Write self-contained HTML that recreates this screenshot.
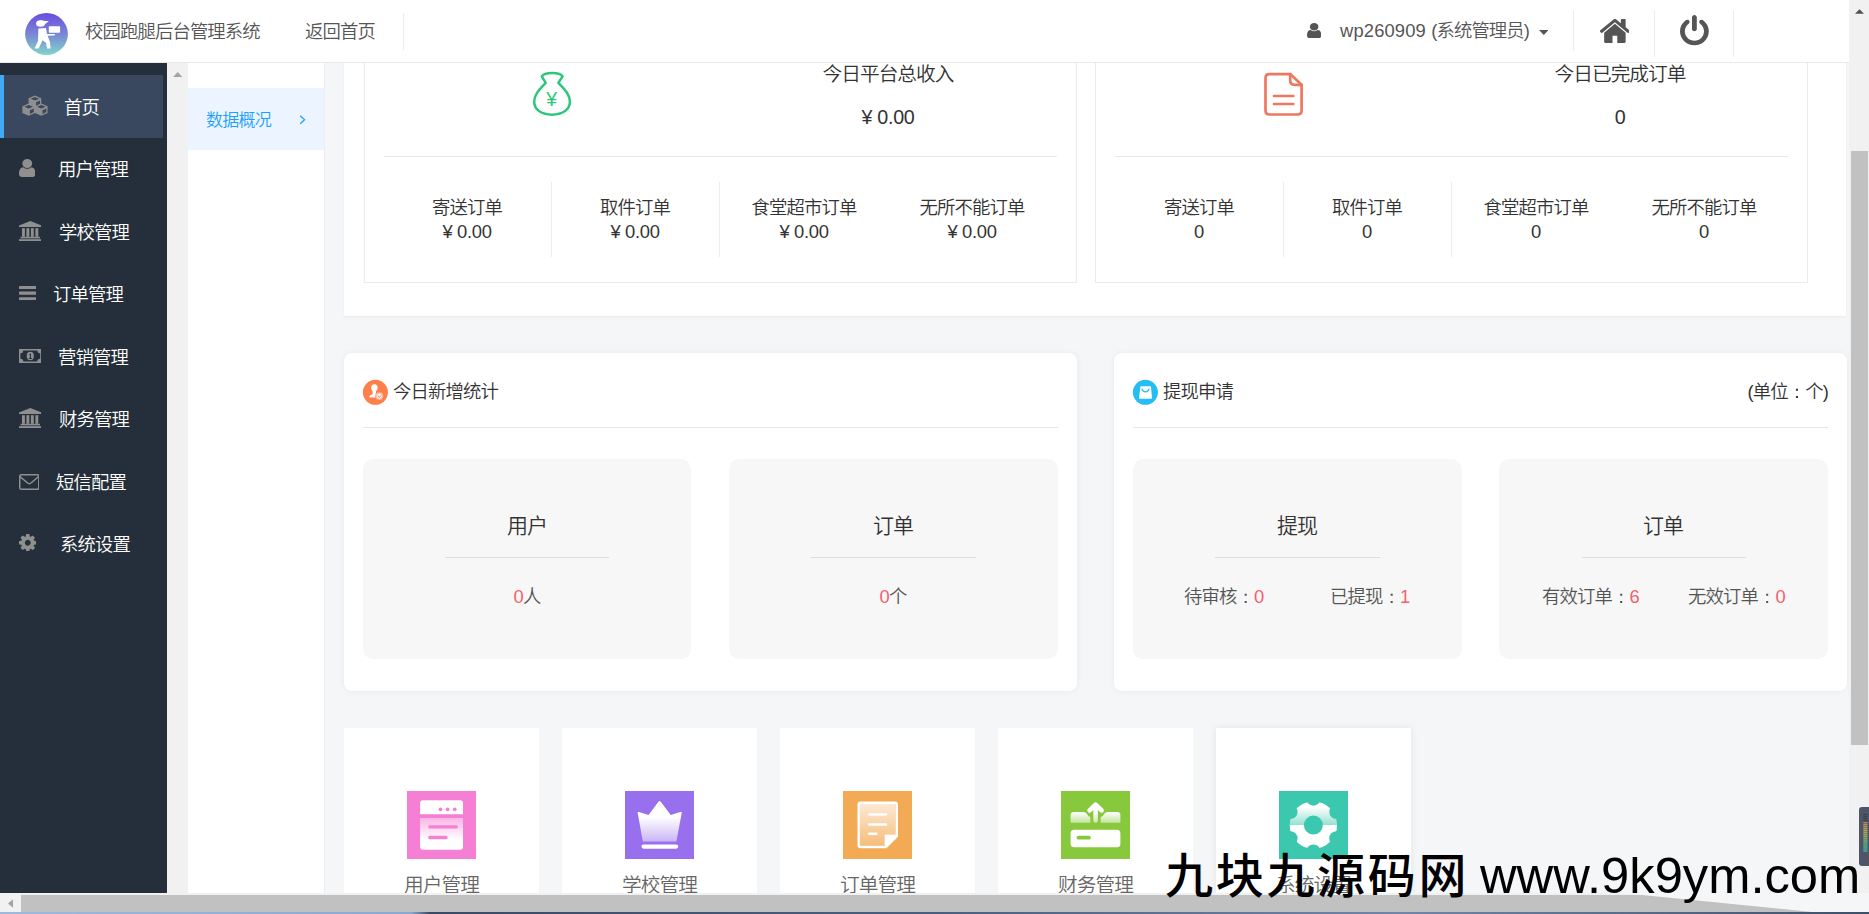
<!DOCTYPE html>
<html lang="zh-CN">
<head>
<meta charset="utf-8">
<title>校园跑腿后台管理系统</title>
<style>
*{box-sizing:border-box;margin:0;padding:0}
html,body{width:1869px;height:914px;overflow:hidden;background:#f5f6f8}
body{position:relative;font-family:"Liberation Sans","Noto Sans CJK SC",sans-serif;font-weight:350;color:#333;font-size:18.38px;letter-spacing:-0.88px;line-height:1}
.abs{position:absolute}
.t{position:absolute;white-space:nowrap;line-height:1}
.c{transform:translateX(-50%);text-align:center}
.t{margin-top:.7px}
.n{letter-spacing:-.3px !important}
/* header */
#hdr{position:absolute;left:0;top:0;width:1849px;height:63px;background:#fff;border-bottom:1px solid #e9e9e9}
.vsep{position:absolute;width:1px;background:#ececec}
/* sidebar */
#side{position:absolute;left:0;top:63px;width:167px;height:830px;background:#242f3b}
#side .act{position:absolute;left:0;top:12px;width:163px;height:63px;background:#3a485f;border-left:4px solid #42a9f5}
#side .t{color:#fff;font-size:18.38px;letter-spacing:-0.88px}
/* secondary */
#strip{position:absolute;left:167px;top:63px;width:21px;height:830px;background:#f1f1f1}
#sub{position:absolute;left:188px;top:63px;width:137px;height:830px;background:#fff;border-right:1px solid #eceef1}
#sub .act{position:absolute;left:0;top:25px;width:136px;height:62px;background:#ecf5ff}
/* main */
#main{position:absolute;left:0;top:0;width:1849px;height:893px;background:#f5f6f8;overflow:hidden}
#main .t{font-size:18.38px;letter-spacing:-0.88px;color:#333}
.panel{position:absolute;background:#fff}
.card{position:absolute;border:1px solid #ebebeb;background:#fff}
.hl{position:absolute;height:1px;background:#e8e8e8}
.box{position:absolute;background:#f7f7f7;border-radius:10px}
.red{color:#f4606c}
.jp{font-family:"WenQuanYi Zen Hei","Noto Sans CJK SC",sans-serif;line-height:0}
/* scrollbars */
#vs{position:absolute;left:1849px;top:0;width:20px;height:893px;background:#f1f1f1}
#hs{position:absolute;left:0;top:893px;width:1869px;height:19px;background:#f1f1f1}
#bot{position:absolute;left:0;top:912px;width:1869px;height:2px;background:linear-gradient(90deg,#9db9dc 0,#8aa9d0 22%,#3a4a66 23%,#4a5f80 50%,#6f86a8 75%,#3f4f6a 100%)}
#wm{position:absolute;left:1166px;top:850px;font-size:50px;letter-spacing:0;color:#000;white-space:nowrap;line-height:1;font-family:"Liberation Sans","Noto Sans CJK SC",sans-serif}
</style>
</head>
<body>

<!-- MAIN CONTENT -->
<div id="main">
  <!-- top panel -->
  <div class="panel" style="left:344px;top:0;width:1502px;height:316px;box-shadow:0 1px 2px rgba(0,0,0,.05)"></div>
  <div class="card" style="left:364px;top:20px;width:713px;height:263px"></div>
  <div class="card" style="left:1095px;top:20px;width:713px;height:263px"></div>

  <svg class="abs" style="left:520px;top:62px" width="65" height="65" viewBox="0 0 65 65"><path d="M21.8 14.4 C24.5 9.8 39.9 9.8 42.6 14.4 L38.4 20.8 C44 27 49.9 32 49.9 39.8 C49.9 48 42 52.7 32 52.7 C22 52.7 14.2 48 14.2 39.8 C14.2 32 20 27 25.7 20.8Z" fill="none" stroke="#2dc77b" stroke-width="2.5" stroke-linejoin="round"/><text x="31.7" y="43.6" text-anchor="middle" font-family="Liberation Sans, sans-serif" font-size="19.5" letter-spacing="0" fill="#2dc77b">¥</text></svg>
  <svg class="abs" style="left:1250px;top:62px" width="65" height="65" viewBox="0 0 65 65"><g fill="none" stroke="#ef7760" stroke-width="2.7" stroke-linejoin="round" stroke-linecap="round"><path d="M40.2 12.1 H19.5 Q15.5 12.1 15.5 16.1 V48.5 Q15.5 52.5 19.5 52.5 H47.6 Q51.6 52.5 51.6 48.5 V22.8 Z"/><path d="M40.2 12.1 V18.6 Q40.2 22.8 44.6 22.8 H51.6"/><path d="M24 34 H43.3 M24 42 H43.3"/></g></svg>
  <div class="t c" style="left:888px;top:64px;font-size:19.69px;letter-spacing:-0.94px">今日平台总收入</div>
  <div class="t c n" style="left:888px;top:107px;font-size:19.69px">¥ 0.00</div>
  <div class="hl" style="left:384px;top:156px;width:673px"></div>
  <div class="vsep" style="left:551px;top:182px;height:75px"></div>
  <div class="vsep" style="left:719px;top:182px;height:75px"></div>
  <div class="t c" style="left:467px;top:198px">寄送订单</div><div class="t c n" style="left:467px;top:222px">¥ 0.00</div>
  <div class="t c" style="left:635px;top:198px">取件订单</div><div class="t c n" style="left:635px;top:222px">¥ 0.00</div>
  <div class="t c" style="left:804px;top:198px">食堂超市订单</div><div class="t c n" style="left:804px;top:222px">¥ 0.00</div>
  <div class="t c" style="left:972px;top:198px">无所不能订单</div><div class="t c n" style="left:972px;top:222px">¥ 0.00</div>

  <div class="t c" style="left:1620px;top:64px;font-size:19.69px;letter-spacing:-0.94px">今日已完成订单</div>
  <div class="t c n" style="left:1620px;top:107px;font-size:19.69px">0</div>
  <div class="hl" style="left:1115px;top:156px;width:673px"></div>
  <div class="vsep" style="left:1283px;top:182px;height:75px"></div>
  <div class="vsep" style="left:1451px;top:182px;height:75px"></div>
  <div class="t c" style="left:1199px;top:198px">寄送订单</div><div class="t c n" style="left:1199px;top:222px">0</div>
  <div class="t c" style="left:1367px;top:198px">取件订单</div><div class="t c n" style="left:1367px;top:222px">0</div>
  <div class="t c" style="left:1536px;top:198px">食堂超市订单</div><div class="t c n" style="left:1536px;top:222px">0</div>
  <div class="t c" style="left:1704px;top:198px">无所不能订单</div><div class="t c n" style="left:1704px;top:222px">0</div>

  <!-- stats panels -->
  <div class="panel" style="left:344px;top:353px;width:733px;height:338px;border-radius:8px;box-shadow:0 0 6px rgba(0,0,0,.06)"></div>
  <div class="panel" style="left:1114px;top:353px;width:733px;height:338px;border-radius:8px;box-shadow:0 0 6px rgba(0,0,0,.06)"></div>

  <svg class="abs" style="left:362px;top:379px" width="27" height="27" viewBox="362 379 27 27"><circle cx="375.4" cy="392.3" r="12.5" fill="#fe7f49"/><g fill="#fff"><ellipse cx="374.4" cy="387.7" rx="3.25" ry="3.5"/><path d="M372.6 390.5 H376 V393 Q376.2 395.8 378 397.6 H370.2 Q369 397.6 369.2 396.6 Q369.6 395 372.6 394.2Z"/><circle cx="379.3" cy="396.1" r="3.9" stroke="#fe7f49" stroke-width=".7"/><circle cx="379.3" cy="396.1" r="2.9" fill="none" stroke="#fe7f49" stroke-width=".5"/></g><path d="M377.6 395.5 L379.2 397.6 L381 395.3" fill="none" stroke="#fe7f49" stroke-width="1"/></svg>
  <svg class="abs" style="left:1132px;top:379px" width="27" height="27" viewBox="1132 379 27 27"><circle cx="1145.4" cy="392.3" r="12.5" fill="#24bdf4"/><path d="M1141.2 386.2 H1150.2 Q1150.9 386.2 1151 387 L1152 397.8 Q1152 398.7 1151.2 398.7 H1139.8 Q1139 398.7 1139 397.8 L1140.4 387 Q1140.5 386.2 1141.2 386.2Z" fill="#fff"/><path d="M1142.1 389.2 Q1142.6 391.8 1145.5 391.8 Q1148.4 391.8 1148.9 389.2" fill="none" stroke="#24bdf4" stroke-width="1.3" stroke-linecap="round"/></svg>
  <div class="t" style="left:393px;top:382px">今日新增统计</div>
  <div class="hl" style="left:363px;top:427px;width:695px;background:#e4e7ea"></div>
  <div class="box" style="left:363px;top:459px;width:328px;height:200px"></div>
  <div class="box" style="left:729px;top:459px;width:329px;height:200px"></div>
  <div class="t c" style="left:527px;top:514.3px;font-size:21.00px;letter-spacing:-1.00px">用户</div>
  <div class="hl" style="left:445px;top:557px;width:164px;background:#dcdcdc"></div>
  <div class="t c" style="left:527px;top:587px;color:#555"><span class="red">0</span>人</div>
  <div class="t c" style="left:893px;top:514.3px;font-size:21.00px;letter-spacing:-1.00px">订单</div>
  <div class="hl" style="left:811px;top:557px;width:165px;background:#dcdcdc"></div>
  <div class="t c" style="left:893px;top:587px;color:#555"><span class="red">0</span>个</div>

  <div class="t" style="left:1163px;top:382px">提现申请</div>
  <div class="t" style="right:21px;top:382px">(单位<span class="jp">：</span>个)</div>
  <div class="hl" style="left:1133px;top:427px;width:695px;background:#e4e7ea"></div>
  <div class="box" style="left:1133px;top:459px;width:329px;height:200px"></div>
  <div class="box" style="left:1499px;top:459px;width:329px;height:200px"></div>
  <div class="t c" style="left:1297px;top:514.3px;font-size:21.00px;letter-spacing:-1.00px">提现</div>
  <div class="hl" style="left:1215px;top:557px;width:165px;background:#dcdcdc"></div>
  <div class="t" style="left:1184px;top:587px;color:#555">待审核<span class="jp">：</span><span class="red">0</span></div>
  <div class="t" style="left:1330px;top:587px;color:#555">已提现<span class="jp">：</span><span class="red">1</span></div>
  <div class="t c" style="left:1663px;top:514.3px;font-size:21.00px;letter-spacing:-1.00px">订单</div>
  <div class="hl" style="left:1582px;top:557px;width:164px;background:#dcdcdc"></div>
  <div class="t" style="left:1542px;top:587px;color:#555">有效订单<span class="jp">：</span><span class="red">6</span></div>
  <div class="t" style="left:1688px;top:587px;color:#555">无效订单<span class="jp">：</span><span class="red">0</span></div>

  <!-- tiles -->
  <div class="panel" style="left:344px;top:728px;width:195px;height:200px"></div>
  <div class="panel" style="left:562px;top:728px;width:195px;height:200px"></div>
  <div class="panel" style="left:780px;top:728px;width:195px;height:200px"></div>
  <div class="panel" style="left:998px;top:728px;width:195px;height:200px"></div>
  <div class="panel" style="left:1216px;top:728px;width:195px;height:200px;box-shadow:0 0 8px rgba(0,0,0,.08)"></div>
  <svg class="abs" style="left:407px;top:791px" width="69" height="68" viewBox="0 0 69 68"><defs><linearGradient id="g1" x1="0" y1="0" x2="0" y2="1"><stop offset="0" stop-color="#fff" stop-opacity=".42"/><stop offset=".68" stop-color="#fff"/><stop offset="1" stop-color="#fff"/></linearGradient></defs><rect width="69" height="68" fill="#f57fd3"/><path d="M16.1 9.3 H53 Q56 9.3 56 12.3 V23.3 H13.1 V12.3 Q13.1 9.3 16.1 9.3Z" fill="#fff"/><circle cx="33.5" cy="18.3" r="1.9" fill="#f57fd3"/><circle cx="40.6" cy="18.3" r="1.9" fill="#f57fd3"/><circle cx="47.7" cy="18.3" r="1.9" fill="#f57fd3"/><path d="M13.1 27.1 H56 V55.8 Q56 58.8 53 58.8 H16.1 Q13.1 58.8 13.1 55.8Z" fill="url(#g1)"/><path d="M22.8 35.9 H49.2 M22.8 46.5 H39" stroke="#f57fd3" stroke-width="3.3" stroke-linecap="round"/></svg>
  <svg class="abs" style="left:625px;top:791px" width="69" height="68" viewBox="0 0 69 68"><defs><linearGradient id="g2" x1="0" y1="0" x2="0" y2="1"><stop offset="0" stop-color="#fff"/><stop offset=".4" stop-color="#fff"/><stop offset="1" stop-color="#fff" stop-opacity=".48"/></linearGradient></defs><rect width="69" height="68" fill="#9870ee"/><path d="M12.8 22.4 Q12 20.6 14 21 L23.6 23.9 L33.6 10.6 Q34.6 9.4 35.6 10.6 L45.7 23.9 L55.4 21 Q57.4 20.6 56.6 22.4 L51.4 50.6 H17.8Z" fill="url(#g2)"/><rect x="16.5" y="53.5" width="36.7" height="4.2" rx="2.1" fill="#fff"/></svg>
  <svg class="abs" style="left:843px;top:791px" width="69" height="68" viewBox="0 0 69 68"><defs><linearGradient id="g3" x1="0" y1="0" x2="0" y2="1"><stop offset="0" stop-color="#fff" stop-opacity=".75"/><stop offset="1" stop-color="#fff" stop-opacity=".22"/></linearGradient></defs><rect width="69" height="68" fill="#f3aa55"/><path d="M17.5 10.5 H52 Q55 10.5 55 13.5 V45.7 L43.4 57.2 H17.5 Q14.5 57.2 14.5 54.2 V13.5 Q14.5 10.5 17.5 10.5Z" fill="#fff"/><path d="M16.9 12.9 H52.6 V43.6 H41.6 V54.8 H16.9Z" fill="#f3aa55"/><path d="M16.9 12.9 H52.6 V43.6 H41.6 V54.8 H16.9Z" fill="url(#g3)"/><path d="M26.2 23.6 H43 M26.2 33.6 H43 M26.2 42.8 H33.4" stroke="#fff" stroke-width="2.5" stroke-linecap="round"/></svg>
  <svg class="abs" style="left:1061px;top:791px" width="69" height="68" viewBox="0 0 69 68"><defs><linearGradient id="g4" x1="0" y1="0" x2="0" y2="1"><stop offset="0" stop-color="#fff"/><stop offset="1" stop-color="#fff" stop-opacity=".5"/></linearGradient></defs><rect width="69" height="68" fill="#88c83c"/><rect x="9.6" y="38.8" width="49.8" height="17.5" rx="3.6" fill="#fff"/><rect x="15.6" y="44.8" width="14.2" height="3.7" rx="1.85" fill="#88c83c"/><path d="M12.6 21 H22.5 Q25 21 26.3 23.5 Q27.3 25.6 29.3 26 V31.8 H9.6 V24 Q9.6 21 12.6 21Z" fill="url(#g4)"/><path d="M56.4 21 H46.5 Q44 21 42.7 23.5 Q41.7 25.6 39.7 26 V31.8 H59.4 V24 Q59.4 21 56.4 21Z" fill="url(#g4)"/><path d="M34.6 16 V29.4 M28.6 19.4 L34.6 13.6 L40.6 19.4" fill="none" stroke="url(#g4a)" stroke-width="4.6" stroke-linecap="round" stroke-linejoin="round"/><defs><linearGradient id="g4a" gradientUnits="userSpaceOnUse" x1="0" y1="12" x2="0" y2="32"><stop offset="0" stop-color="#fff"/><stop offset=".45" stop-color="#fff"/><stop offset="1" stop-color="#fff" stop-opacity=".55"/></linearGradient></defs></svg>
  <svg class="abs" style="left:1279px;top:791px" width="69" height="68" viewBox="0 0 69 68"><defs><linearGradient id="g5" gradientUnits="userSpaceOnUse" x1="0" y1="10.5" x2="0" y2="57.7"><stop offset="0" stop-color="#fff"/><stop offset=".12" stop-color="#fff"/><stop offset=".5" stop-color="#fff" stop-opacity=".45"/><stop offset=".5" stop-color="#fff"/><stop offset="1" stop-color="#fff"/></linearGradient></defs><rect width="69" height="68" fill="#3cc8ae"/><circle cx="34.4" cy="34.1" r="23.7" fill="url(#g5)"/><g fill="#3cc8ae"><circle cx="57.44" cy="47.40" r="7.2"/><circle cx="34.40" cy="60.70" r="7.2"/><circle cx="11.36" cy="47.40" r="7.2"/><circle cx="11.36" cy="20.80" r="7.2"/><circle cx="34.40" cy="7.50" r="7.2"/><circle cx="57.44" cy="20.80" r="7.2"/><circle cx="34.4" cy="34.1" r="9.5"/></g></svg>
  <div class="t c" style="left:441.5px;top:875px;font-size:19.69px;letter-spacing:-0.94px;color:#666">用户管理</div>
  <div class="t c" style="left:659.5px;top:875px;font-size:19.69px;letter-spacing:-0.94px;color:#666">学校管理</div>
  <div class="t c" style="left:877.5px;top:875px;font-size:19.69px;letter-spacing:-0.94px;color:#666">订单管理</div>
  <div class="t c" style="left:1095.5px;top:875px;font-size:19.69px;letter-spacing:-0.94px;color:#666">财务管理</div>
  <div class="t c" style="left:1313.5px;top:875px;font-size:19.69px;letter-spacing:-0.94px;color:#666">系统设置</div>
</div>

<!-- SECONDARY MENU -->
<div id="strip"><svg class="abs" style="left:5.9px;top:8.9px" width="9.4" height="5.2" viewBox="0 0 11 6"><path d="M0 6 L5.5 0 L11 6Z" fill="#a3a3a3"/></svg></div>
<div id="sub">
  <div class="act"></div>
  <div class="t" style="left:18px;top:48.5px;font-size:17.06px;letter-spacing:-0.81px;color:#1e9fff">数据概况</div>
  <svg class="abs" style="left:111px;top:52px" width="7" height="10" viewBox="0 0 7 10"><path d="M1.2 .8 L5.6 4.8 L1.2 8.8" fill="none" stroke="#1e9fff" stroke-width="1.25"/></svg>
</div>

<!-- SIDEBAR -->
<div id="side">
  <div class="act"></div>
  <svg class="abs" style="left:21.5px;top:32px" width="27" height="22" viewBox="0 0 27 22"><g transform="translate(6.6 0.6)"><path d="M6.3 0 L12.6 2.7 L12.6 9.3 L6.3 12.2 L0 9.3 L0 2.7Z" fill="#8f8f8f"/><path d="M6.3 1.3 L10.6 3.1 L6.3 4.9 L2 3.1Z M7.5 6.6 L11.4 4.9 L11.4 8.5 L7.5 10.3Z" fill="#3a485f"/></g><g transform="translate(0.4 8.6)"><path d="M6.3 0 L12.6 2.7 L12.6 9.3 L6.3 12.2 L0 9.3 L0 2.7Z" fill="#8f8f8f"/><path d="M6.3 1.3 L10.6 3.1 L6.3 4.9 L2 3.1Z M7.5 6.6 L11.4 4.9 L11.4 8.5 L7.5 10.3Z" fill="#3a485f"/></g><g transform="translate(13 8.6)"><path d="M6.3 0 L12.6 2.7 L12.6 9.3 L6.3 12.2 L0 9.3 L0 2.7Z" fill="#8f8f8f"/><path d="M6.3 1.3 L10.6 3.1 L6.3 4.9 L2 3.1Z M7.5 6.6 L11.4 4.9 L11.4 8.5 L7.5 10.3Z" fill="#3a485f"/></g></svg>
  <svg class="abs" style="left:18.5px;top:96px" width="16.5" height="18" viewBox="256 128 1280 1536" preserveAspectRatio="none"><path d="M1536 1399q0 109-62.500 187t-150.500 78h-854q-88 0-150.500-78t-62.500-187q0-85 8.500-160.500t31.500-152 58.500-131 94-89 134.500-34.500q131 128 313 128t313-128q76 0 134.500 34.500t94 89 58.500 131 31.500 152 8.500 160.500zm-256-887q0 159-112.500 271.500t-271.500 112.500-271.500-112.500-112.500-271.500 112.500-271.500 271.500-112.500 271.500 112.500 112.500 271.500z" fill="#8f8f8f"/></svg>
  <svg class="abs" style="left:18.5px;top:158px" width="22.6" height="20.2" viewBox="0 0 22.6 20.2"><g fill="#8f8f8f"><path d="M11.3 0 L22.6 4.6 L22.6 6.1 L0 6.1 L0 4.6Z"/><rect x="3" y="7.2" width="2.9" height="8.6"/><rect x="7.4" y="7.2" width="2.9" height="8.6"/><rect x="11.9" y="7.2" width="2.9" height="8.6"/><rect x="16.4" y="7.2" width="2.9" height="8.6"/><rect x="1.6" y="15.8" width="19.4" height="1.6"/><rect x="0" y="18.2" width="22.6" height="2"/></g></svg>
  <svg class="abs" style="left:18.7px;top:222.6px" width="17.6" height="14.6" viewBox="0 0 17.6 14.6"><g fill="#8f8f8f"><rect x="0" y="0" width="17.6" height="3.1" rx=".7"/><rect x="0" y="5.6" width="17.6" height="3.1" rx=".7"/><rect x="0" y="11.3" width="17.6" height="3.1" rx=".7"/></g></svg>
  <svg class="abs" style="left:18.7px;top:286px" width="22.6" height="14" viewBox="0 0 22.6 14"><path fill-rule="evenodd" fill="#8f8f8f" d="M0 0H22.6V14H0Z M4.4 1.4 Q4.2 4 1.4 4.3 V9.7 Q4.2 10 4.4 12.6 H18.2 Q18.4 10 21.2 9.7 V4.3 Q18.4 4 18.2 1.4Z"/><ellipse cx="11.3" cy="7" rx="3.6" ry="4.2" fill="#8f8f8f"/><path d="M10.2 5.2 L11.9 4.3 V9 H12.9 V9.9 H9.9 V9 H10.9 V5.6 L10.2 6Z" fill="#242f3b"/></svg>
  <svg class="abs" style="left:18.5px;top:345px" width="22.6" height="20.2" viewBox="0 0 22.6 20.2"><g fill="#8f8f8f"><path d="M11.3 0 L22.6 4.6 L22.6 6.1 L0 6.1 L0 4.6Z"/><rect x="3" y="7.2" width="2.9" height="8.6"/><rect x="7.4" y="7.2" width="2.9" height="8.6"/><rect x="11.9" y="7.2" width="2.9" height="8.6"/><rect x="16.4" y="7.2" width="2.9" height="8.6"/><rect x="1.6" y="15.8" width="19.4" height="1.6"/><rect x="0" y="18.2" width="22.6" height="2"/></g></svg>
  <svg class="abs" style="left:18.7px;top:411px" width="20.6" height="16" viewBox="0 0 20.6 16"><rect x=".75" y=".75" width="19.1" height="14.5" rx="1.6" fill="none" stroke="#8f8f8f" stroke-width="1.5"/><path d="M1 2.6 L8.6 9 Q10.3 10.3 12 9 L19.6 2.6" fill="none" stroke="#8f8f8f" stroke-width="1.5"/></svg>
  <svg class="abs" style="left:18.7px;top:470.6px" width="17.5" height="17.5" viewBox="128 128 1536 1536"><path d="M1152 896q0-106-75-181t-181-75-181 75-75 181 75 181 181 75 181-75 75-181zm512-109v222q0 12-8 23t-20 13l-185 28q-19 54-39 91 35 50 107 138 10 12 10 25t-9 23q-27 37-99 108t-94 71q-12 0-26-9l-138-108q-44 23-91 38-16 136-29 186-7 28-36 28h-222q-14 0-24.500-8.500t-11.500-21.500l-28-184q-49-16-90-37l-141 107q-10 9-25 9-14 0-25-11-126-114-165-168-7-10-7-23 0-12 8-23 15-21 51-66.500t54-70.500q-27-50-41-99l-183-27q-13-2-21-12.500t-8-23.500v-222q0-12 8-23t19-13l186-28q14-46 39-92-40-57-107-138-10-12-10-24 0-10 9-23 26-36 98.500-107.500t94.500-71.500q13 0 26 10l138 107q44-23 91-38 16-136 29-186 7-28 36-28h222q14 0 24.500 8.500t11.500 21.500l28 184q49 16 90 37l142-107q9-9 24-9 13 0 25 10 129 119 165 170 7 8 7 22 0 12-8 23-15 21-51 66.500t-54 70.500q26 50 41 98l183 28q13 2 21 12.500t8 23.500z" fill="#8f8f8f"/></svg>
  <div class="t" style="left:64px;top:35px">首页</div>
  <div class="t" style="left:58px;top:97px">用户管理</div>
  <div class="t" style="left:59px;top:160px">学校管理</div>
  <div class="t" style="left:53px;top:222px">订单管理</div>
  <div class="t" style="left:58px;top:285px">营销管理</div>
  <div class="t" style="left:59px;top:347px">财务管理</div>
  <div class="t" style="left:56px;top:410px">短信配置</div>
  <div class="t" style="left:60px;top:472px">系统设置</div>
</div>

<!-- HEADER -->
<div id="hdr">
  <svg class="abs" style="left:24px;top:12px" width="45" height="44" viewBox="24 12 45 44"><defs><linearGradient id="lg" x1="0" y1="0" x2="0" y2="1"><stop offset="0" stop-color="#6a4be0"/><stop offset=".5" stop-color="#7a86d5"/><stop offset="1" stop-color="#7fd6c8"/></linearGradient></defs><ellipse cx="46.5" cy="34" rx="21.4" ry="21" fill="url(#lg)"/><g fill="#fff"><ellipse cx="40.5" cy="23.5" rx="4.4" ry="3.2"/><path d="M40 20.4 L48.9 21.3 Q46.8 22.6 44.6 24.6 L40 24Z"/><path d="M38.4 28.6 L46 28 L47 33.9 L54.6 33.9 Q55.3 34.7 54.6 35.5 L47.6 35.7 L50 42 L50.6 48.6 L47 48.6 L46 42.8 L42.6 40.2 L38.6 48.6 L34.5 48.6 L38 41Z"/><rect x="48.8" y="26.2" width="11.3" height="6.6" rx="1"/></g></svg>
  <svg class="abs" style="left:1306.7px;top:22.9px" width="14.3" height="15.2" viewBox="256 128 1280 1536" preserveAspectRatio="none"><path d="M1536 1399q0 109-62.500 187t-150.500 78h-854q-88 0-150.500-78t-62.500-187q0-85 8.500-160.500t31.500-152 58.500-131 94-89 134.500-34.500q131 128 313 128t313-128q76 0 134.500 34.500t94 89 58.500 131 31.500 152 8.500 160.500zm-256-887q0 159-112.500 271.500t-271.500 112.500-271.500-112.500-112.500-271.500 112.500-271.500 271.500-112.500 271.500 112.500 112.500 271.500z" fill="#555"/></svg>
  <svg class="abs" style="left:1538.5px;top:29.5px" width="9.6" height="5" viewBox="0 0 9.6 5"><path d="M0 0H9.6L4.8 5Z" fill="#555"/></svg>
  <svg class="abs" style="left:1599.6px;top:19.2px" width="29.8" height="23.9" viewBox="97 256 1598 1280" preserveAspectRatio="none"><path d="M1472 992v480q0 26-19 45t-45 19h-384v-384h-256v384h-384q-26 0-45-19t-19-45v-480q0-1 .5-3t.5-3l575-474 575 474q1 2 1 6zm223-69l-62 74q-8 9-21 11h-3q-13 0-21-7l-692-577-692 577q-12 8-24 7-13-2-21-11l-62-74q-8-10-7-23.500t11-21.500l719-599q32-26 76-26t76 26l244 204v-195q0-14 9-23t23-9h192q14 0 23 9t9 23v408l219 182q10 8 11 21.500t-7 23.500z" fill="#555"/></svg>
  <svg class="abs" style="left:1680.1px;top:15.3px" width="28.8" height="30.3" viewBox="128 0 1536 1664" preserveAspectRatio="none"><path d="M1664 896q0 156-61 298t-164 245-245 164-298 61-298-61-245-164-164-245-61-298q0-182 80.500-343t226.500-270q43-32 95.500-25t83.500 50q32 42 24.500 94.500t-49.500 84.500q-98 74-151.500 181t-53.500 228q0 104 40.500 198.500t109.500 163.500 163.500 109.500 198.500 40.500 198.500-40.500 163.500-109.500 109.500-163.500 40.500-198.500q0-121-53.500-228t-151.500-181q-42-32-49.500-84.500t24.500-94.500q31-43 84-50t95 25q146 109 226.500 270t80.500 343zm-640-768v640q0 52-38 90t-90 38-90-38-38-90v-640q0-52 38-90t90-38 90 38 38 90z" fill="#555"/></svg>
  <div class="t" style="left:85px;top:22px;font-size:18.38px;letter-spacing:-0.88px;color:#555">校园跑腿后台管理系统</div>
  <div class="t" style="left:305px;top:22px;font-size:18.38px;letter-spacing:-0.88px;color:#555">返回首页</div>
  <div class="vsep" style="left:403px;top:13px;height:37px"></div>
  <div class="t" style="left:1340px;top:21px;font-size:18.38px;letter-spacing:.15px;color:#555">wp260909 <span style="letter-spacing:-.88px">(系统管理员)</span></div>
  <div class="vsep" style="left:1573px;top:10px;height:41px"></div>
  <div class="vsep" style="left:1654px;top:10px;height:47px"></div>
  <div class="vsep" style="left:1733px;top:10px;height:47px"></div>
</div>

<!-- SCROLLBARS -->
<div id="vs">
  <svg class="abs" style="left:6px;top:9px" width="9" height="5" viewBox="0 0 10 5"><path d="M0 5 L5 0 L10 5Z" fill="#505050"/></svg>
  <div class="abs" style="left:2px;top:151px;width:17px;height:594px;background:#c1c1c1"></div>
</div>
<div id="hs">
  <div class="abs" style="left:21px;top:2px;width:1848px;height:17px;background:#c1c1c1"></div>
  <svg class="abs" style="left:8px;top:6px" width="5.4" height="9" viewBox="0 0 6 10"><path d="M6 0 L0 5 L6 10Z" fill="#a3a3a3"/></svg>
  <svg class="abs" style="left:1600px;top:0" width="269" height="19" viewBox="1600 893 269 19"><path d="M1622 893 H1869 V912 H1812 Z" fill="#f5f6f8"/></svg>
</div>
<div id="bot"></div>
<svg class="abs" style="left:1859px;top:807px" width="10" height="59" viewBox="0 0 10 59"><path d="M3 0 H10 V59 H3 Q0 59 0 56 V3 Q0 0 3 0Z" fill="#4d5566"/><rect x="4.3" y="7.20" width="4.2" height="1" fill="#3a3f4b"/><rect x="4.3" y="9.22" width="4.2" height="1" fill="#3a3f4b"/><rect x="4.3" y="11.24" width="4.2" height="1" fill="#3a3f4b"/><rect x="4.3" y="13.26" width="4.2" height="1" fill="#3a3f4b"/><rect x="4.3" y="15.28" width="4.2" height="1" fill="#f0a040"/><rect x="4.3" y="17.30" width="4.2" height="1" fill="#f2ac40"/><rect x="4.3" y="19.32" width="4.2" height="1" fill="#f0b840"/><rect x="4.3" y="21.34" width="4.2" height="1" fill="#ecc644"/><rect x="4.3" y="23.36" width="4.2" height="1" fill="#e8d44a"/><rect x="4.3" y="25.38" width="4.2" height="1" fill="#dcd850"/><rect x="4.3" y="27.40" width="4.2" height="1" fill="#c8dc58"/><rect x="4.3" y="29.42" width="4.2" height="1" fill="#b0de64"/><rect x="4.3" y="31.44" width="4.2" height="1" fill="#98de70"/><rect x="4.3" y="33.46" width="4.2" height="1" fill="#84de7c"/><rect x="4.3" y="35.48" width="4.2" height="1" fill="#70de8c"/><rect x="4.3" y="37.50" width="4.2" height="1" fill="#5cdc9c"/><rect x="4.3" y="39.52" width="4.2" height="1" fill="#4cdcac"/><rect x="4.3" y="41.54" width="4.2" height="1" fill="#40dab8"/><rect x="4.3" y="43.56" width="4.2" height="1" fill="#3cd8c0"/></svg>
<div id="wm"><span class="abs" id="wm1" style="left:-1px;top:3px;font-size:48px;font-weight:500;letter-spacing:2.7px">九块九源码网</span><span class="abs" id="wm2" style="left:314px;top:1px;font-size:50.7px;font-weight:400;letter-spacing:0">www.9k9ym.com</span></div>

</body>
</html>
